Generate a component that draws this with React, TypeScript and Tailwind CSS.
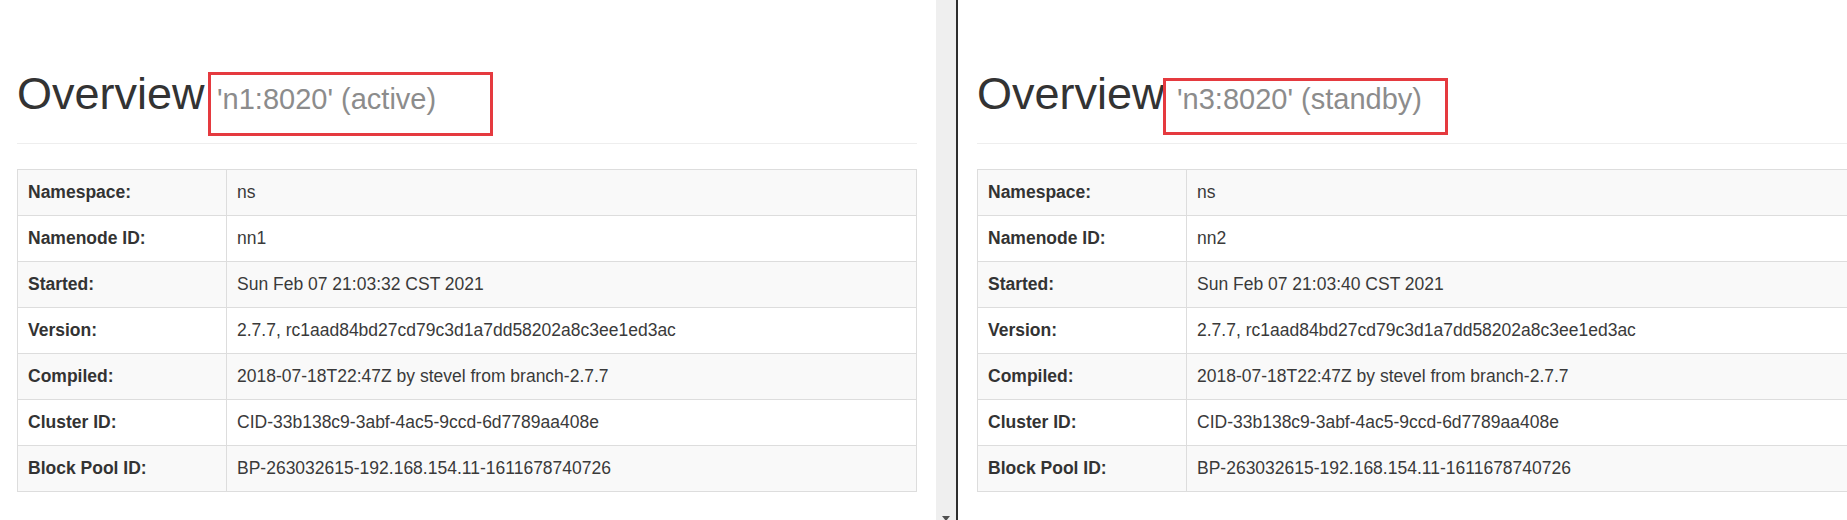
const rowsA = [
  ["Namespace:", "ns"],
  ["Namenode ID:", "nn1"],
  ["Started:", "Sun Feb 07 21:03:32 CST 2021"],
  ["Version:", "2.7.7, rc1aad84bd27cd79c3d1a7dd58202a8c3ee1ed3ac"],
  ["Compiled:", "2018-07-18T22:47Z by stevel from branch-2.7.7"],
  ["Cluster ID:", "CID-33b138c9-3abf-4ac5-9ccd-6d7789aa408e"],
  ["Block Pool ID:", "BP-263032615-192.168.154.11-1611678740726"],
];

const rowsB = [
  ["Namespace:", "ns"],
  ["Namenode ID:", "nn2"],
  ["Started:", "Sun Feb 07 21:03:40 CST 2021"],
  ["Version:", "2.7.7, rc1aad84bd27cd79c3d1a7dd58202a8c3ee1ed3ac"],
  ["Compiled:", "2018-07-18T22:47Z by stevel from branch-2.7.7"],
  ["Cluster ID:", "CID-33b138c9-3abf-4ac5-9ccd-6d7789aa408e"],
  ["Block Pool ID:", "BP-263032615-192.168.154.11-1611678740726"],
];

type PanelProps = {
  host: string;
  state: string;
  rows: string[][];
  box: "left" | "right";
};

const Panel = ({ host, state, rows, box }: PanelProps) => {
  return (
    <div className="w-[900px] shrink-0">
      {/* titre */}
      <h1 className="relative mt-[69px] border-b border-[#eee] pb-[24px] text-[45px] leading-[50px] font-normal text-[#333] whitespace-nowrap">
        Overview{" "}
        <small className="text-[29px] leading-none text-[#8c8c8c]">
          '{host}' ({state})
        </small>
        {/* cadre rouge de la capture */}
        {box === "left" ? (
          <div className="absolute left-[191px] top-[3px] h-[64px] w-[285px] border-[3px] border-[#e53a3f]" />
        ) : (
          <div className="absolute left-[186px] top-[9px] h-[57px] w-[285px] border-[3px] border-[#e53a3f]" />
        )}
      </h1>

      <table className="mt-[25px] w-full table-fixed border-collapse border border-[#ddd] text-[17.5px] leading-[25px] text-[#333]">
        <colgroup>
          <col className="w-[209px]" />
          <col />
        </colgroup>
        <tbody>
          {rows.map((r, i) => (
            <tr key={i} className={i % 2 === 0 ? "bg-[#f9f9f9]" : "bg-white"}>
              <th className="border border-[#ddd] p-[10px] text-left font-bold whitespace-nowrap">
                {r[0]}
              </th>
              <td className="border border-[#ddd] p-[10px] whitespace-nowrap text-[#3a3a3a]">{r[1]}</td>
            </tr>
          ))}
        </tbody>
      </table>
    </div>
  );
};

export default function App() {
  return (
    <div
      className="flex h-[520px] w-full overflow-hidden bg-white"
      style={{ fontFamily: '"Liberation Sans", Arial, sans-serif' }}
    >
      {/* fenêtre gauche */}
      <div className="w-[936px] shrink-0 pl-[17px]">
        <Panel host="n1:8020" state="active" rows={rowsA} box="left" />
      </div>

      {/* barre de défilement */}
      <div className="relative w-[20px] shrink-0 bg-[#efefef]">
        <div className="absolute bottom-[-1px] left-[6px] h-0 w-0 border-x-[4px] border-t-[5px] border-x-transparent border-t-[#505050]" />
      </div>
      <div className="w-[2px] shrink-0 bg-[#2e2e2e]" />

      {/* fenêtre droite */}
      <div className="min-w-0 flex-1 overflow-hidden pl-[19px]">
        <Panel host="n3:8020" state="standby" rows={rowsB} box="right" />
      </div>
    </div>
  );
}
